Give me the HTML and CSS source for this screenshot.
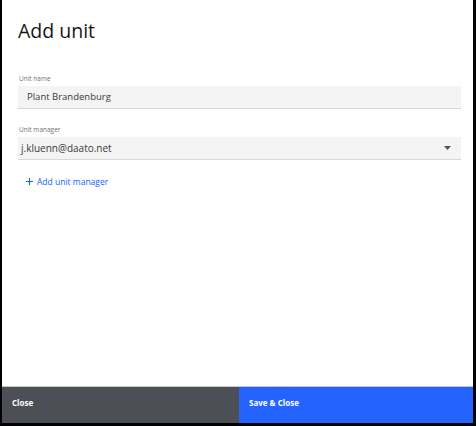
FILE: index.html
```html
<!DOCTYPE html>
<html>
<head>
<meta charset="utf-8">
<link rel="stylesheet" href="styles.css">
</head>
<body>
<div class="frame">
  <div class="modal">
    <div class="content">
      <h1 class="title">Add unit</h1>
      <div class="field">
        <label class="label">Unit name</label>
        <div class="input">Plant Brandenburg</div>
      </div>
      <div class="field">
        <label class="label">Unit manager</label>
        <div class="select">
          <span class="select-value">j.kluenn@daato.net</span>
          <svg class="caret" width="7" height="4" viewBox="0 0 7 4"><path d="M0 0h7L3.5 4z" fill="#525252"/></svg>
        </div>
      </div>
      <div class="add">
        <svg class="plus" width="7" height="7" viewBox="0 0 7 7"><path d="M3.5 0v7M0 3.5h7" stroke="#0f62fe" stroke-width="1"/></svg>
        <span>Add unit manager</span>
      </div>
    </div>
    <div class="footer">
      <div class="btn btn-secondary">Close</div>
      <div class="btn btn-primary">Save &amp; Close</div>
    </div>
  </div>
</div>
</body>
</html>
```
FILE: styles.css
```css
html, body {
  margin: 0;
  padding: 0;
  background: #fff;
}
.frame {
  width: 476px;
  height: 426px;
  box-sizing: border-box;
  border-left: 2px solid #000;
  border-right: 3px solid #000;
  border-bottom: 3px solid #000;
  font-family: "Open Sans", "Noto Sans", sans-serif;
  color: #161616;
}
.modal {
  height: 100%;
  display: flex;
  flex-direction: column;
  background: #fff;
}
.content {
  flex: 1;
  padding: 0 12px 0 16px;
}
.title {
  margin: 18px 0 0 0;
  font-size: 19.5px;
  font-weight: 400;
  line-height: 26px;
  letter-spacing: 0;
}
.field {
  display: flex;
  flex-direction: column;
}
.field:first-of-type {
  margin-top: 31px;
}
.field + .field {
  margin-top: 17px;
}
.label {
  font-size: 6.5px;
  color: #6f6f6f;
  line-height: 8px;
  margin-bottom: 3px;
  margin-left: 1px;
}
.input {
  height: 22px;
  background: #f4f4f4;
  border-bottom: 1px solid #d8d8d8;
  font-size: 9.5px;
  line-height: 22px;
  padding-left: 9px;
  color: #393939;
}
.select {
  height: 22px;
  background: #f4f4f4;
  border-bottom: 1px solid #d8d8d8;
  display: flex;
  align-items: center;
  justify-content: space-between;
  padding: 0 10px 0 3px;
  font-size: 10px;
  color: #393939;
}
.caret {
  display: block;
}
.add {
  margin-top: 16px;
  margin-left: 8px;
  display: flex;
  align-items: center;
  gap: 4px;
  font-size: 8.5px;
  color: #0f62fe;
}
.plus {
  display: block;
}
.footer {
  height: 37px;
  box-sizing: border-box;
  display: grid;
  grid-template-columns: 237px 1fr;
  border-top: 1px solid #c6c6c6;
}
.btn {
  font-size: 8px;
  font-weight: 700;
  color: #fff;
  padding: 10px 0 0 10px;
}
.btn-secondary {
  background: #4c4f56;
}
.btn-primary {
  background: #2563ff;
}
```
